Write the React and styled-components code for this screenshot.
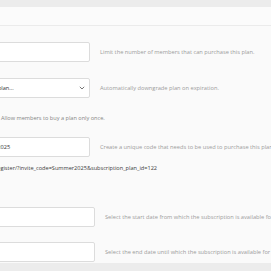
import React from "react";
import styled, { createGlobalStyle } from "styled-components";

const Global = createGlobalStyle`
  html, body { margin: 0; padding: 0; background: #fafafa; overflow: hidden; }
  body { font-family: "Open Sans", "Liberation Sans", sans-serif; }
`;

const Page = styled.div`
  width: 271px;
  height: 271px;
  display: flex;
  flex-direction: column;
  background: #fafafa;
  overflow: hidden;
`;

const TopBar = styled.div`
  height: 7px;
  background: #ececec;
  flex: none;
`;

const Header = styled.div`
  height: 18px;
  border-bottom: 1px solid #ebebeb;
  background: #fbfbfb;
  flex: none;
`;

const Body = styled.div`
  flex: 1;
  display: flex;
  flex-direction: column;
  margin-left: -40px;
  padding-top: 16px;
`;

const Row = styled.div`
  display: flex;
  align-items: center;
  gap: ${(p) => p.$gap || 10}px;
  margin-top: ${(p) => p.$top || 0}px;
  flex: none;
`;

const Box = styled.div`
  box-sizing: border-box;
  width: ${(p) => p.$w || 130}px;
  height: 20px;
  border: 1px solid #dcdcdc;
  border-radius: 2px;
  background: #fff;
  display: flex;
  align-items: center;
  justify-content: space-between;
  padding: 0 4px 0 0;
  flex: none;
  font-size: 5.6px;
  color: #333;
  overflow: hidden;
`;

const BoxText = styled.span`
  padding-left: ${(p) => p.$pl || 6}px;
  white-space: nowrap;
`;

const Desc = styled.span`
  font-size: 5.7px;
  color: #9c9c9c;
  white-space: nowrap;
`;

const Note = styled.div`
  margin-top: ${(p) => p.$top || 0}px;
  padding-left: 41px;
  font-size: 5.6px;
  color: #858585;
  white-space: nowrap;
  line-height: 8px;
`;

const Link = styled.div`
  margin-top: ${(p) => p.$top || 0}px;
  padding-left: 40px;
  text-indent: -29px;
  font-size: 5.6px;
  color: #3a3a3a;
  white-space: nowrap;
  line-height: 8px;
`;

const Footer = styled.div`
  margin-top: auto;
  height: 8px;
  background: #ececec;
  flex: none;
`;

const Chevron = () => (
  <svg width="6" height="4" viewBox="0 0 6 4">
    <path d="M0.8 0.8L3 3L5.2 0.8" fill="none" stroke="#666" strokeWidth="0.9" />
  </svg>
);

export default function App() {
  return (
    <Page>
      <Global />
      <TopBar />
      <Header />
      <Body>
        <Row>
          <Box />
          <Desc>Limit the number of members that can purchase this plan.</Desc>
        </Row>
        <Row $top={16}>
          <Box>
            <BoxText $pl={20}>Select plan...</BoxText>
            <Chevron />
          </Box>
          <Desc>Automatically downgrade plan on expiration.</Desc>
        </Row>
        <Note $top={16}>Allow members to buy a plan only once.</Note>
        <Row $top={15}>
          <Box>
            <BoxText $pl={14}>Summer2025</BoxText>
          </Box>
          <Desc>Create a unique code that needs to be used to purchase this plan.</Desc>
        </Row>
        <Link $top={7}>site.com/register/?invite_code=Summer2025&amp;subscription_plan_id=122</Link>
        <Row $top={35}>
          <Box $w={135} />
          <Desc>Select the start date from which the subscription is available for purchase.</Desc>
        </Row>
        <Row $top={15}>
          <Box $w={135} />
          <Desc>Select the end date until which the subscription is available for purchase.</Desc>
        </Row>
      </Body>
      <Footer />
    </Page>
  );
}
